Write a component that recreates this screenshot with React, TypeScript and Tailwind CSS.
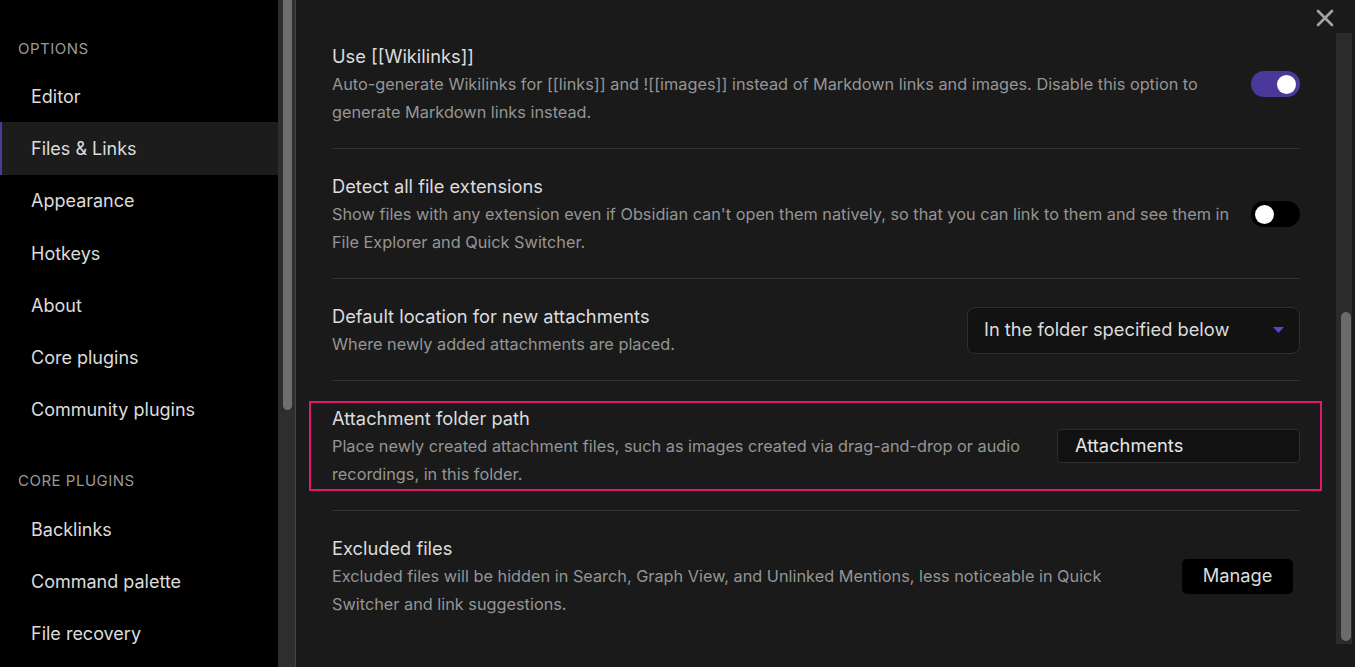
import { X } from "lucide-react";

const options = ["Editor", "Files & Links", "Appearance", "Hotkeys", "About", "Core plugins", "Community plugins"];
const corePlugins = ["Backlinks", "Command palette", "File recovery"];

function NavItem({ label, active = false }: { label: string; active?: boolean }) {
  return (
    <div
      className={
        "flex h-[52.3px] items-center text-[18px] text-[#dcdcdc] " +
        (active ? "border-l-2 border-[#4b3a9e] bg-[#1c1c1c] pl-[29px]" : "pl-[31px]")
      }
    >
      {label}
    </div>
  );
}

function Toggle({ on }: { on: boolean }) {
  return (
    <div
      className={
        "flex h-[26px] w-[49px] shrink-0 items-center rounded-full px-[4px] " +
        (on ? "justify-end bg-[#4a389b]" : "justify-start bg-black")
      }
    >
      <div className="h-[19px] w-[19px] rounded-full bg-white" />
    </div>
  );
}

function Setting({
  title,
  lines,
  control,
  last = false,
}: {
  title: string;
  lines: string[];
  control: React.ReactNode;
  last?: boolean;
}) {
  return (
    <div className={"flex items-center pt-[23px] pb-[22px] " + (last ? "" : "border-b border-[#333333]")}>
      <div className="flex-1">
        <div className="text-[18.3px] leading-[28px] text-[#dcdcdc]">{title}</div>
        <div className="text-[16.3px] leading-[28px] text-[#959595]">
          {lines.map((l, i) => (
            <div key={i}>{l}</div>
          ))}
        </div>
      </div>
      {control}
    </div>
  );
}

export default function App() {
  return (
    <div
      className="flex h-[667px] w-[1355px] overflow-hidden bg-[#1a1a1a]"
      style={{ fontFamily: "Inter, 'Noto Sans', sans-serif" }}
    >
      {/* sidebar */}
      <div className="w-[278px] shrink-0 bg-black pt-[39px]">
        <div className="mb-[11px] pl-[18px] text-[15px] leading-[20px] tracking-[0.5px] text-[#999999]">OPTIONS</div>
        {options.map((o) => (
          <NavItem key={o} label={o} active={o === "Files & Links"} />
        ))}
        <div className="mb-[12px] mt-[35px] pl-[18px] text-[15px] leading-[20px] tracking-[0.5px] text-[#999999]">
          CORE PLUGINS
        </div>
        {corePlugins.map((o) => (
          <NavItem key={o} label={o} />
        ))}
      </div>

      {/* sidebar scrollbar */}
      <div className="flex w-[18px] shrink-0 border-r border-[#454545] bg-[#2e2e2e] pl-[5px]">
        <div className="h-[410px] w-[9px] rounded-b-full bg-[#6e6e6e]" />
      </div>

      {/* content */}
      <div className="relative flex flex-1">
        <div className="flex-1 pl-[36px] pr-[36px] pt-[19px]">
          <Setting
            title="Use [[Wikilinks]]"
            lines={[
              "Auto-generate Wikilinks for [[links]] and ![[images]] instead of Markdown links and images. Disable this option to",
              "generate Markdown links instead.",
            ]}
            control={<Toggle on />}
          />
          <Setting
            title="Detect all file extensions"
            lines={[
              "Show files with any extension even if Obsidian can't open them natively, so that you can link to them and see them in",
              "File Explorer and Quick Switcher.",
            ]}
            control={<Toggle on={false} />}
          />
          <Setting
            title="Default location for new attachments"
            lines={["Where newly added attachments are placed."]}
            control={
              <div className="flex h-[47px] w-[333px] shrink-0 items-center justify-between rounded-[8px] border border-[#2f2f2f] bg-[#121212] pl-[16px] pr-[15px] text-[18.3px] text-[#dcdcdc]">
                <span>In the folder specified below</span>
                <svg width="11" height="6" viewBox="0 0 11 6">
                  <path d="M0 0 L11 0 L5.5 6 Z" fill="#5a45c8" />
                </svg>
              </div>
            }
          />
          <div className="relative">
            <Setting
              title="Attachment folder path"
              lines={[
                "Place newly created attachment files, such as images created via drag-and-drop or audio",
                "recordings, in this folder.",
              ]}
              control={
                <div className="flex h-[34px] w-[243px] shrink-0 items-center rounded-[4px] border border-[#2e2e2e] bg-[#111111] pl-[17px] text-[18.3px] text-[#e6e6e6]">
                  Attachments
                </div>
              }
            />
            <div className="pointer-events-none absolute left-[-23px] right-[-22px] top-[20px] h-[90px] border-2 border-[#e0186c]" />
          </div>
          <Setting
            title="Excluded files"
            last
            lines={[
              "Excluded files will be hidden in Search, Graph View, and Unlinked Mentions, less noticeable in Quick",
              "Switcher and link suggestions.",
            ]}
            control={
              <div className="mr-[7px] flex h-[35px] w-[111px] shrink-0 items-center justify-center rounded-[5px] bg-black text-[18.3px] text-[#dcdcdc]">
                Manage
              </div>
            }
          />
        </div>

        {/* main scrollbar */}
        <div className="mb-[23px] mt-[33px] flex w-[16px] shrink-0 bg-[#2b2b2b] pl-[5px] pr-[1px]">
          <div className="mt-[279px] mb-[3px] w-[10px] flex-1 rounded-full bg-[#6b6b6b]" />
        </div>
        <div className="w-[3px] shrink-0" />

        <X className="absolute right-[16px] top-[4px]" size={28} color="#a3a3a3" strokeWidth={2.3} />
      </div>
    </div>
  );
}
